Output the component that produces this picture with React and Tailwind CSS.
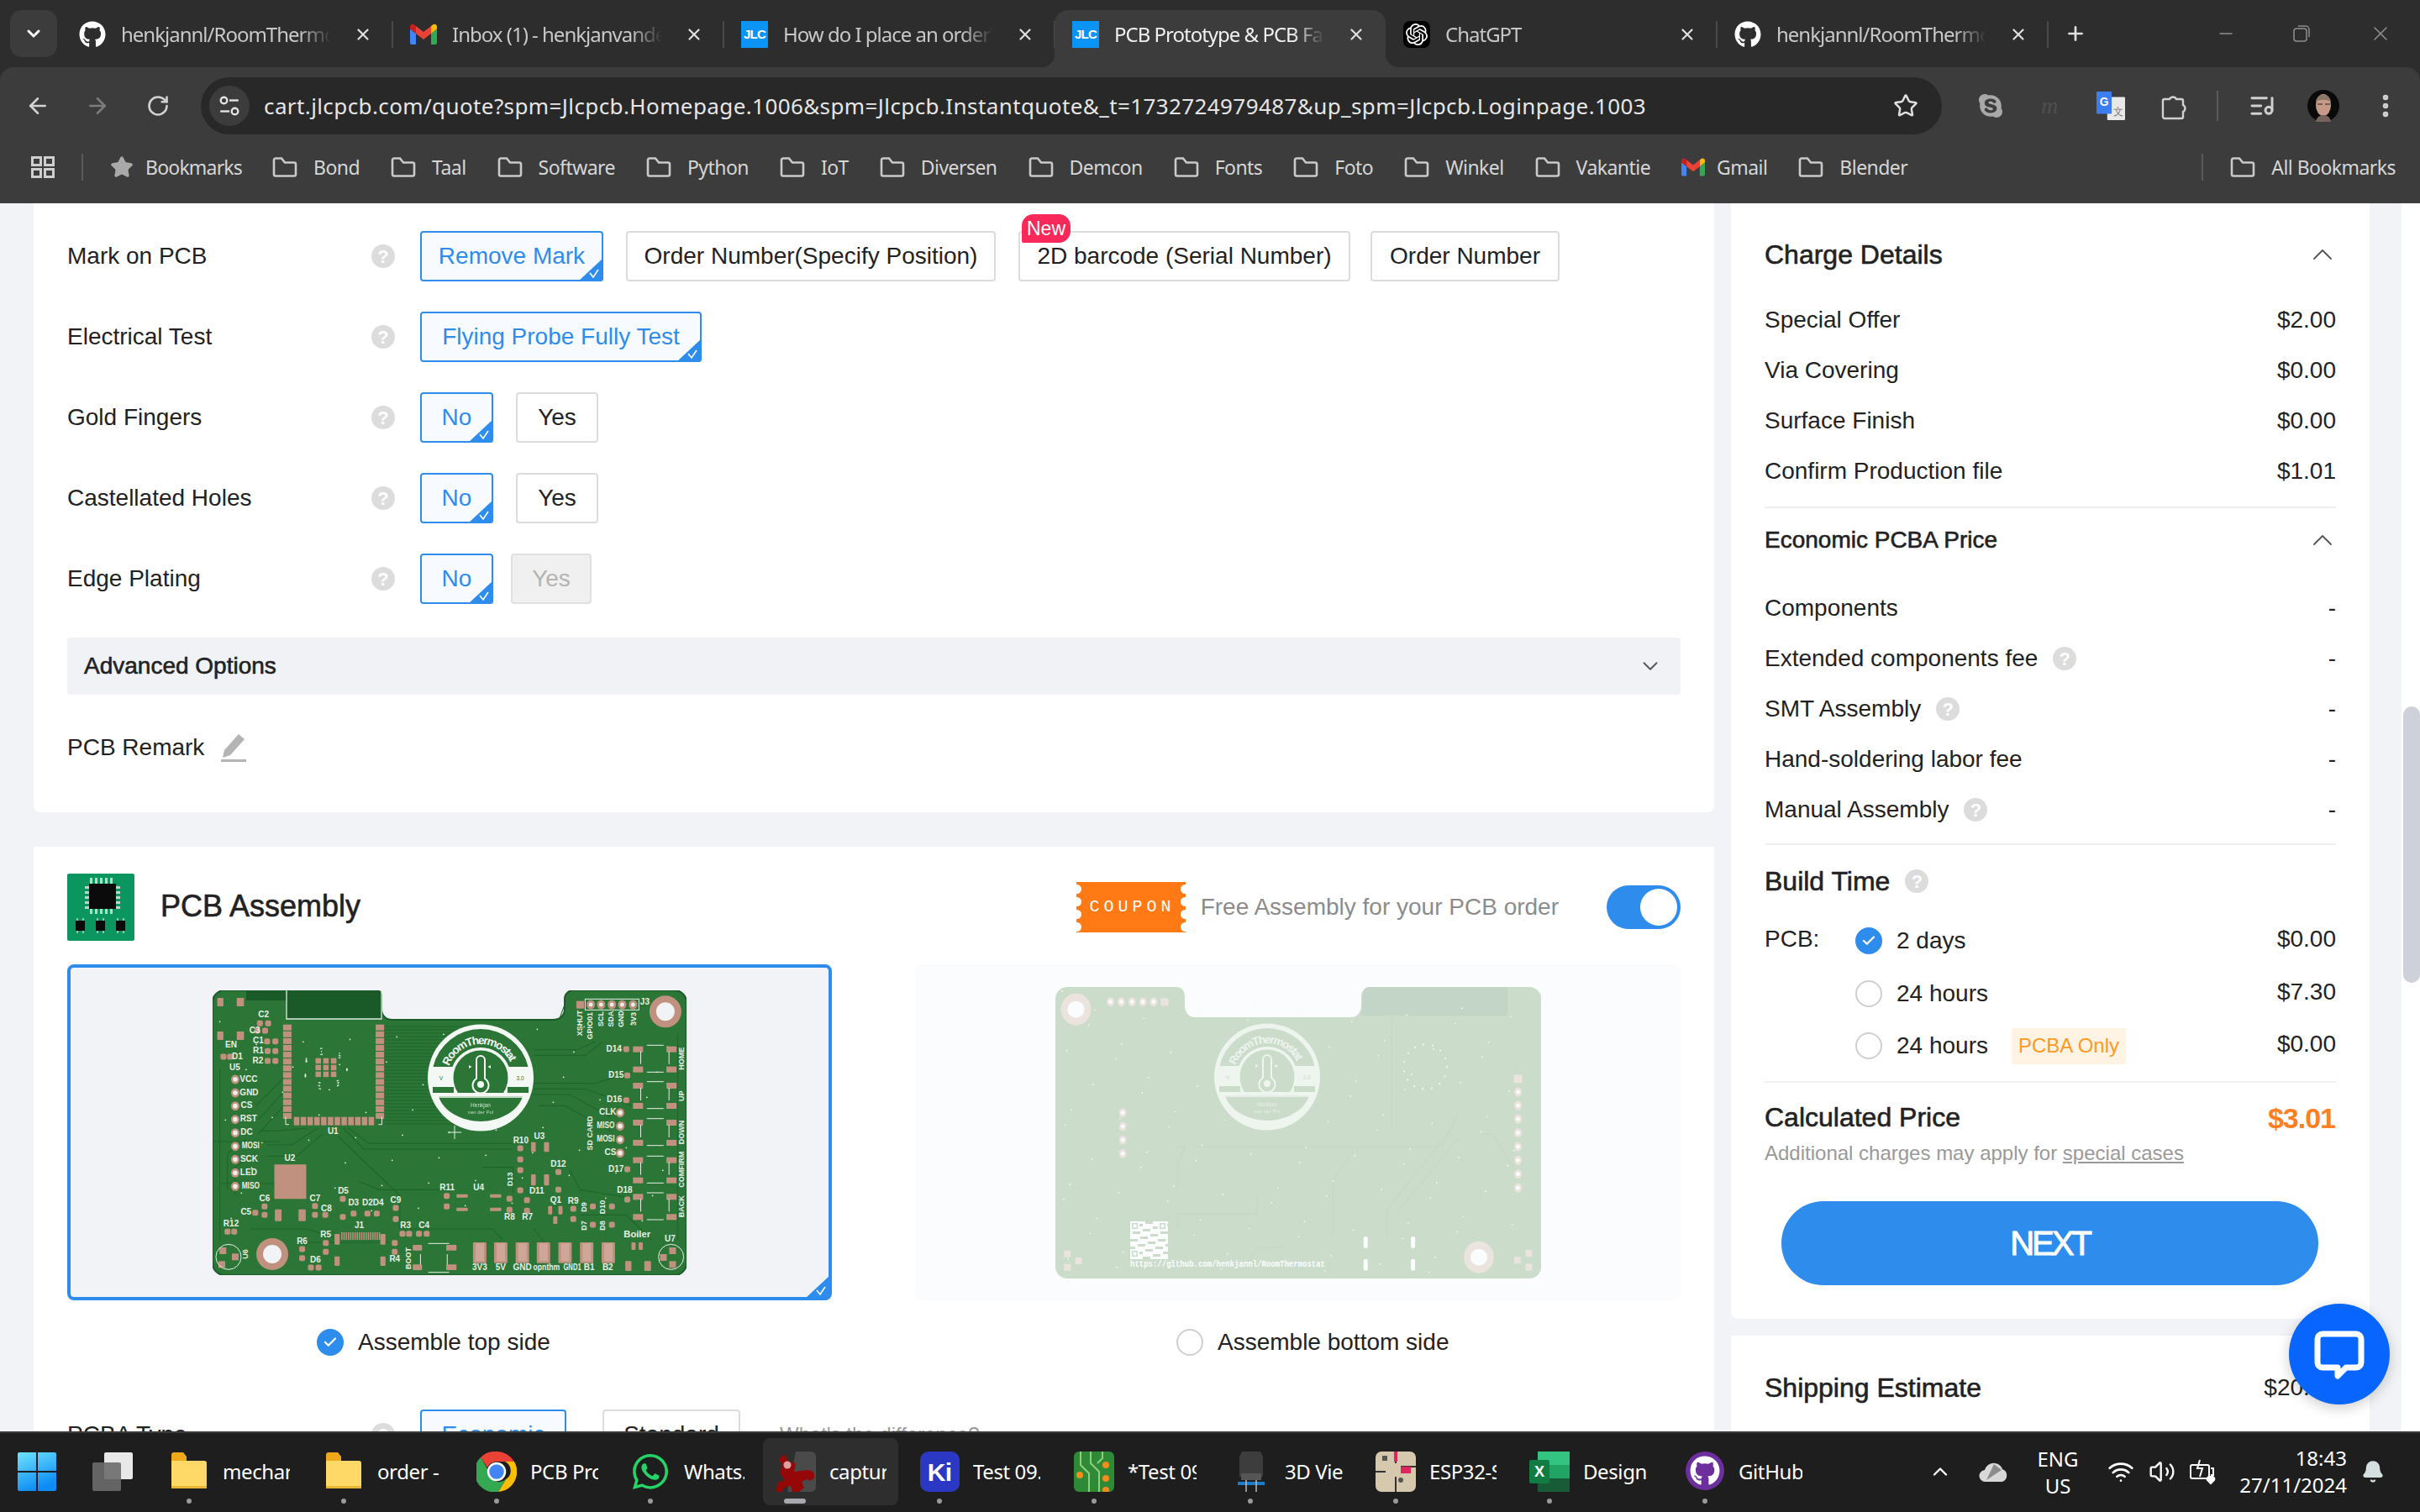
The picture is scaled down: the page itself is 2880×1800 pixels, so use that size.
// JLCPCB quote page in Chrome on Windows 11
import React from 'react'
import { ArrowLeft, ArrowRight, RotateCw, Star, ListMusic, EllipsisVertical, ChevronDown, ChevronUp, Check, Plus, X, Minus, Wifi, Volume2, Bell } from 'lucide-react'
import { FaGithub, FaSkype, FaWhatsapp } from 'react-icons/fa'
import { SiOpenai } from 'react-icons/si'

const STROKE = '[-webkit-text-stroke:0.6px]'

function GmailIcon({ className }) {
  return (
    <svg viewBox="0 0 32 24" className={className}>
      <path d="M2 24h5V11L0 5.5V22a2 2 0 0 0 2 2z" fill="#4285f4" />
      <path d="M25 24h5a2 2 0 0 0 2-2V5.5L25 11z" fill="#34a853" />
      <path d="M25 2v9l7-5.500V3c0-2.700-3-4-5-2.500z" fill="#fbbc04" />
      <path d="M7 11V2l9 7 9-7v9l-9 7z" fill="#ea4335" />
      <path d="M0 3v2.500L7 11V2L5 .5C3-1 0 .3 0 3z" fill="#c5221f" />
    </svg>
  )
}

function FolderIcon() {
  return (
    <svg viewBox="0 0 30 26" className="h-[26px] w-[30px] shrink-0 fill-none stroke-[#c9c9c9] stroke-[2.600]">
      <path d="M2 4.500a2 2 0 0 1 2-2h7l4 5h11a2 2 0 0 1 2 2v12a2 2 0 0 1-2 2H4a2 2 0 0 1-2-2z" />
    </svg>
  )
}

function JlcIcon() {
  return (
    <span className="flex size-[32px] shrink-0 items-center justify-center bg-[#0a94f5] font-['Liberation_Sans'] text-[15px] font-bold tracking-tighter text-white">
      JLC
    </span>
  )
}

function Tab({ icon, title, active, last }) {
  return (
    <div className={`relative flex h-[68px] w-[394px] shrink-0 items-center pb-[10px] pl-[21px] pr-[24px] ${active ? 'rounded-t-[16px] bg-[#3c3c3c]' : ''}`}>
      {active && (
        <>
          <span className="absolute -left-[16px] bottom-0 size-[16px] bg-[radial-gradient(circle_at_0_0,transparent_16px,#3c3c3c_16.5px)]" />
          <span className="absolute -right-[16px] bottom-0 size-[16px] bg-[radial-gradient(circle_at_100%_0,transparent_16px,#3c3c3c_16.5px)]" />
        </>
      )}
      <span className="flex w-[32px] shrink-0 justify-center">{icon}</span>
      <span className={`ml-[18px] w-[250px] overflow-hidden whitespace-nowrap text-[24px] tracking-[-1px] [mask-image:linear-gradient(to_right,black_85%,transparent)] ${active ? 'text-[#f0f0f0]' : 'text-[#c8c8c8]'}`}>
        {title}
      </span>
      <X className="ml-auto size-[22px] shrink-0 text-[#e0e0e0]" strokeWidth={2.4} />
      {!last && !active && <span className="absolute -right-px top-[13px] h-[32px] w-[2px] bg-[#4a4a4a]" />}
    </div>
  )
}

function TabStrip() {
  return (
    <div className="flex h-[80px] shrink-0 items-start bg-[#2d2d2d] pl-[12px] pt-[12px] font-['Noto_Sans']">
      <div className="mr-[5px] flex h-[56px] w-[56px] shrink-0 items-center justify-center rounded-[14px] bg-[#3c3c3c]">
        <ChevronDown className="size-[24px] text-white" strokeWidth={3} />
      </div>
      <Tab icon={<FaGithub className="size-[32px] text-white" />} title="henkjannl/RoomThermostat" />
      <Tab icon={<GmailIcon className="h-[26px] w-[32px]" />} title="Inbox (1) - henkjanvandermeer" />
      <Tab icon={<JlcIcon />} title="How do I place an order?" />
      <Tab active icon={<JlcIcon />} title="PCB Prototype & PCB Fabrication" />
      <Tab
        icon={
          <span className="flex size-[32px] items-center justify-center rounded-[8px] bg-black">
            <SiOpenai className="size-[26px] text-white" />
          </span>
        }
        title="ChatGPT"
      />
      <Tab icon={<FaGithub className="size-[32px] text-white" />} title="henkjannl/RoomThermostat" />
      <Plus className="ml-[20px] mt-[15px] size-[26px] shrink-0 text-[#e0e0e0]" strokeWidth={2.5} />
      <Minus className="ml-[154px] mt-[16px] size-[24px] shrink-0 text-[#8e8e8e]" strokeWidth={1.5} />
      <svg viewBox="0 0 24 24" className="ml-[66px] mt-[16px] size-[24px] shrink-0 fill-none stroke-[#8e8e8e] stroke-[1.500]">
        <rect x="3" y="6" width="15" height="15" rx="3" />
        <path d="M8 3h9a4 4 0 0 1 4 4v9" />
      </svg>
      <X className="ml-[68px] mt-[14px] size-[28px] shrink-0 text-[#8e8e8e]" strokeWidth={1.3} />
    </div>
  )
}

function TuneIcon() {
  return (
    <svg viewBox="0 0 24 24" className="size-[26px] fill-none stroke-[#e4e4e4] stroke-[2.200]">
      <circle cx="6" cy="6" r="3.500" />
      <path d="M12 6h10" />
      <circle cx="18" cy="18" r="3.500" />
      <path d="M2 18h10" />
    </svg>
  )
}

function AddressBar() {
  return (
    <div className="flex h-[80px] shrink-0 items-center pt-[12px] font-['Noto_Sans']">
      <ArrowLeft className="ml-[30px] size-[30px] shrink-0 text-[#d2d2d2]" strokeWidth={2} />
      <ArrowRight className="ml-[41px] size-[30px] shrink-0 text-[#7c7c7c]" strokeWidth={2} />
      <RotateCw className="ml-[43px] size-[28px] shrink-0 text-[#d2d2d2]" strokeWidth={2.200} />
      <div className="ml-[37px] flex h-[68px] w-[2072px] shrink-0 items-center rounded-full bg-[#282828] pl-[10px] pr-[28px]">
        <span className="flex size-[48px] shrink-0 items-center justify-center rounded-full bg-[#3c3c3c]">
          <TuneIcon />
        </span>
        <span className="ml-[17px] whitespace-nowrap text-[26px] tracking-[0.4px] text-[#e6e6e6]">
          cart.jlcpcb.com/quote?spm=Jlcpcb.Homepage.1006&amp;spm=Jlcpcb.Instantquote&amp;_t=1732724979487&amp;up_spm=Jlcpcb.Loginpage.1003
        </span>
        <Star className="ml-auto size-[30px] shrink-0 text-[#e0e0e0]" strokeWidth={2} />
      </div>
      <FaSkype className="ml-[42px] size-[32px] shrink-0 text-[#a8a8a8]" />
      <span className="ml-[37px] w-[34px] shrink-0 text-center font-['Liberation_Serif'] text-[28px] italic text-[#4f4f4f]">m</span>
      <svg viewBox="0 0 32 32" className="ml-[39px] size-[34px] shrink-0">
        <rect x="12" y="6" width="20" height="26" rx="1" fill="#e8e8e8" />
        <rect x="0" y="0" width="17" height="25" rx="1" fill="#3c7df0" />
        <text x="8.500" y="16" textAnchor="middle" fontSize="13" fontWeight="700" fill="#fff" fontFamily="Liberation Sans">G</text>
        <text x="24" y="26" textAnchor="middle" fontSize="11" fill="#777" fontFamily="Liberation Sans">文</text>
      </svg>
      <svg viewBox="0 0 32 34" className="ml-[42px] h-[34px] w-[32px] shrink-0 fill-none stroke-[#d0d0d0] stroke-[2.400]">
        <path d="M5 9h6a4.500 4.500 0 0 1 8 0h6a2 2 0 0 1 2 2v5a4.500 4.500 0 0 1 0 8v6a2 2 0 0 1-2 2H5a2 2 0 0 1-2-2V11a2 2 0 0 1 2-2z" />
      </svg>
      <span className="ml-[35px] h-[36px] w-[2px] shrink-0 bg-[#5a5a5a]" />
      <ListMusic className="ml-[36px] size-[32px] shrink-0 text-[#d0d0d0]" strokeWidth={2.200} />
      <svg viewBox="0 0 38 38" className="ml-[38px] size-[38px] shrink-0">
        <circle cx="19" cy="19" r="19" fill="#0a0a0a" />
        <ellipse cx="19" cy="18" rx="9" ry="13" fill="#c79a88" />
        <path d="M10 38c1-6 5-8 9-8s8 2 9 8z" fill="#77635c" />
        <path d="M10 14c1-6 5-8 9-8s8 2 9 8c-5-3-13-3-18 0z" fill="#8b7767" />
        <path d="M12 17h6M21 17h6" stroke="#5a4a42" strokeWidth="1.500" />
      </svg>
      <EllipsisVertical className="ml-[38px] size-[34px] shrink-0 text-[#d0d0d0]" strokeWidth={2.600} />
    </div>
  )
}

const BOOKMARKS = ['Bond', 'Taal', 'Software', 'Python', 'IoT', 'Diversen', 'Demcon', 'Fonts', 'Foto', 'Winkel', 'Vakantie']

function Bookmark({ name, icon, gap = 'gap-[19px]' }) {
  return (
    <div className={`flex shrink-0 items-center ${gap}`}>
      {icon || <FolderIcon />}
      <span className="whitespace-nowrap text-[23px] tracking-[-0.55px] text-[#d6d6d6]">{name}</span>
    </div>
  )
}

function BookmarksBar() {
  return (
    <div className="flex h-[82px] shrink-0 items-center pb-[4px] pl-[37px] pr-[29px] font-['Noto_Sans']">
      <svg viewBox="0 0 28 26" className="h-[26px] w-[28px] shrink-0 fill-none stroke-[#cfcfcf] stroke-[3]">
        <rect x="1.500" y="1.500" width="10" height="9" />
        <rect x="16.500" y="1.500" width="10" height="9" />
        <rect x="1.500" y="15.500" width="10" height="9" />
        <rect x="16.500" y="15.500" width="10" height="9" />
      </svg>
      <span className="ml-[32px] h-[32px] w-[2px] shrink-0 bg-[#5a5a5a]" />
      <Star className="ml-[32px] size-[28px] shrink-0 fill-[#a9a9a9] text-[#a9a9a9]" />
      <span className="ml-[14px] mr-[36px] shrink-0 text-[23px] tracking-[-0.8px] text-[#d6d6d6]">Bookmarks</span>
      <div className="flex items-center gap-[37px]">
        {BOOKMARKS.map((b) => <Bookmark key={b} name={b} />)}
        <Bookmark name="Gmail" gap="gap-[14px]" icon={<GmailIcon className="h-[22px] w-[28px]" />} />
        <Bookmark name="Blender" />
      </div>
      <span className="ml-auto mr-[32px] h-[32px] w-[2px] shrink-0 bg-[#5a5a5a]" />
      <Bookmark name="All Bookmarks" />
    </div>
  )
}

function Help({ className = '' }) {
  return (
    <span className={`flex size-[28px] shrink-0 items-center justify-center rounded-full bg-[#dcdcdc] font-['Liberation_Sans'] text-[22px] font-bold text-white ${className}`}>
      ?
    </span>
  )
}

function Corner() {
  return (
    <svg viewBox="0 0 30 28" className="absolute -bottom-[2px] -right-[2px] h-[28px] w-[30px]">
      <path d="M30 0V24a4 4 0 0 1-4 4H0z" fill="#2e8cec" />
      <path d="M14 18l4 5 6-9" fill="none" stroke="#fff" strokeWidth="1.600" />
    </svg>
  )
}

function Option({ children, selected, disabled, className = '', badge }) {
  let tone = 'border-[#dcdcdc] bg-white text-[#222]'
  if (selected) tone = 'border-[#2e8cec] bg-[#f7fbff] text-[#2e8cec]'
  if (disabled) tone = 'border-[#e0e0e0] bg-[#f0f0f0] text-[#b4b4b4]'
  return (
    <div className={`relative flex h-[60px] shrink-0 items-center justify-center rounded-[4px] border-2 text-[28px] ${tone} ${className}`}>
      {children}
      {selected && <Corner />}
      {badge && (
        <span className="absolute left-[2px] -top-[22px] flex h-[34px] w-[58px] items-center justify-center rounded-bl-[2px] rounded-br-[14px] rounded-tl-[14px] rounded-tr-[14px] bg-[#f8285a] text-[23px] text-white">
          {badge}
        </span>
      )}
    </div>
  )
}

function OptionRow({ label, children }) {
  return (
    <div className="flex h-[60px] items-center">
      <span className="w-[362px] text-[28px] text-[#222]">{label}</span>
      <Help />
      <div className="ml-[30px] flex items-center">{children}</div>
    </div>
  )
}

// the two board renders are traced from the reference, z coordinates follow a 1.633 x 3 crop
const fx = (z) => (z - 316) / 1.633
const fy = (z) => (z - 148) / 3
const PAD = '#c1917f'
const BOARD = '#2b7636'

function Logo({ cx, cy, fg, bg, id }) {
  return (
    <g transform={`translate(${cx} ${cy})`} fontFamily="Liberation Sans">
      <ellipse rx="63" ry="63.500" fill={fg} />
      <path d="M-56.500 -13A58 58 0 0 1 56.500 -13L33.600 -13A36 36 0 0 0 -33.600 -13z" fill={bg} />
      <path d="M-40 0A40 40 0 0 1 40 0" id={id} fill="none" />
      <text fontWeight="700" fontSize="13.500" letterSpacing="-1.500" fill={fg}>
        <textPath href={`#${id}`} startOffset="14">RoomThermostat</textPath>
      </text>
      <circle r="32.500" fill={bg} />
      <rect x="-57" y="11" width="25" height="7" fill={bg} />
      <rect x="32" y="11" width="25" height="7" fill={bg} />
      <rect x="-34" y="18" width="68" height="4" fill={fg} />
      <path d="M-50 22H50C45 40 22 52 0 52S-45 40 -50 22z" fill={bg} />
      <rect x="-50" y="22" width="100" height="2" fill={fg} opacity=".75" />
      <text x="0" y="35" textAnchor="middle" fontSize="6.500" fill={fg} opacity=".8">Henkjan</text>
      <text x="0" y="43" textAnchor="middle" fontSize="6" fill={fg} opacity=".7">van der Pol</text>
      <text x="-47" y="3" textAnchor="middle" fontSize="6.500" fill={bg}>V</text>
      <text x="47" y="3" textAnchor="middle" fontSize="6.500" fill={bg}>3.0</text>
      <path d="M-5 -21a5 5 0 0 1 10 0V1a9.500 9.500 0 1 1-10 0z" fill="none" stroke={fg} strokeWidth="2" />
      <circle cy="8" r="4" fill={fg} />
      <path d="M-14 -15l3.500 2-3.500 2zM12 -15l-3.500 2 3.500 2z" fill={fg} />
    </g>
  )
}

const FRONT_LABELS = [
  ['C2', 415, 237], ['C3', 398, 293], ['C1', 405, 330], ['R1', 405, 365], ['R2', 404, 400], ['D1', 364, 385], ['U5', 359, 424], ['EN', 352, 344],
  ['U2', 466, 750], ['C6', 417, 892], ['C5', 381, 942], ['C7', 515, 894], ['C8', 537, 928], ['D5', 570, 867], ['D3', 590, 907], ['D2', 617, 907], ['D4', 638, 907],
  ['C9', 672, 899], ['J1', 601, 990], ['R3', 691, 990], ['C4', 727, 990], ['R5', 536, 1023], ['R6', 490, 1047], ['D6', 516, 1112], ['R4', 670, 1110], ['U1', 550, 653],
  ['R10', 915, 687], ['U3', 951, 670], ['D12', 988, 771], ['D11', 946, 865], ['R11', 772, 855], ['U4', 833, 853], ['Q1', 983, 900], ['R9', 1017, 903], ['R8', 893, 960], ['R7', 928, 960],
  ['D14', 1096, 358], ['D15', 1100, 452], ['D16', 1097, 540], ['D17', 1100, 787], ['D18', 1117, 864], ['Boiler', 1141, 1023], ['U7', 1205, 1036], ['R12', 352, 982], ['J3', 1156, 190],
  ['VCC', 386, 466], ['GND', 387, 514], ['CS', 382, 561], ['RST', 386, 609], ['DC', 382, 657], ['MOSI', 390, 705], ['SCK', 387, 752], ['LED', 386, 800], ['MISO', 390, 848],
  ['CLK', 1084, 585], ['MISO', 1080, 633], ['MOSI', 1080, 681], ['CS', 1089, 729],
  ['3V3', 835, 1140], ['5V', 876, 1140], ['GND', 918, 1140], ['opnthm', 965, 1140], ['GND1', 1015, 1140], ['B1', 1048, 1140], ['B2', 1084, 1140],
]
const FRONT_VERTICAL = [
  ['XSHUT', 1030, 265], ['GPIO01', 1050, 275], ['SCL', 1071, 250], ['SDA', 1091, 250], ['GND', 1111, 250], ['3V3', 1135, 250], ['SD CARD', 1050, 658],
  ['HOME', 1228, 392], ['UP', 1228, 525], ['DOWN', 1228, 655], ['COMFIRM', 1228, 788], ['BACK', 1228, 920], ['BOOT', 697, 1105], ['U6', 381, 1090], ['D13', 895, 822], ['D9', 1038, 922], ['D10', 1075, 922], ['D7', 1038, 988], ['D8', 1075, 988],
]
const FRONT_PADS = [
  [822, 1048, 848, 1122], [863, 1048, 889, 1122], [905, 1048, 931, 1122], [946, 1048, 972, 1122], [988, 1048, 1014, 1122], [1030, 1048, 1056, 1122], [1072, 1048, 1098, 1122],
  [436, 770, 498, 893], [437, 930, 450, 972], [483, 930, 497, 972], [325, 175, 337, 205], [363, 175, 377, 205], [325, 295, 337, 325], [363, 295, 377, 325],
  [705, 1057, 723, 1077], [770, 1057, 790, 1077], [705, 1127, 723, 1147], [770, 1127, 790, 1147],
  [790, 876, 812, 888], [855, 876, 877, 888], [790, 924, 812, 936], [855, 924, 877, 936], [935, 690, 944, 725], [960, 690, 970, 725], [935, 805, 944, 845], [960, 805, 970, 845],
  [968, 918, 976, 948], [988, 918, 996, 948], [978, 955, 986, 982], [1118, 1115, 1130, 1150], [1155, 1115, 1168, 1150], [1130, 1048, 1138, 1075], [1144, 1048, 1152, 1075],
  [553, 1018, 563, 1056], [642, 1018, 652, 1056], [553, 1098, 563, 1132], [642, 1098, 652, 1132],
]
const FRONT_SMALL = [
  [408, 266], [424, 266], [403, 292], [418, 292], [422, 330], [438, 330], [423, 365], [438, 365], [423, 400], [438, 400], [345, 1010], [358, 1010],
  [417, 920], [417, 950], [399, 942], [515, 918], [515, 950], [535, 950], [672, 925], [672, 965], [569, 893], [569, 957], [590, 945], [617, 945], [635, 945],
  [685, 1017], [698, 1017], [717, 1017], [732, 1017], [536, 1050], [536, 1082], [490, 1072], [490, 1104], [670, 1050], [670, 1082], [507, 1138], [522, 1138],
  [914, 712], [914, 752], [914, 790], [914, 862], [988, 797], [988, 860], [771, 882], [771, 920], [893, 892], [893, 932], [927, 897], [927, 935], [1017, 928], [1017, 965],
  [1120, 358], [1122, 452], [1120, 540], [1122, 787], [1122, 895], [1055, 920], [1092, 920], [1055, 985], [1092, 985], [337, 385], [350, 385],
]
const FRONT_TRACES = [
  'M570 640L610 715H900', 'M580 640L620 695H900', 'M560 670L680 880V1000', 'M530 660L480 740H420', 'M520 640L470 700H420',
  'M500 640L440 650H410', 'M455 460L400 560', 'M455 510L405 610', 'M455 560L405 660', 'M840 780H900V870', 'M1010 790L1030 860L1130 890', 'M700 1000H860L880 1040', 'M940 1000L960 1045',
  'M390 1000H500L550 1030', 'M1220 300V1040', 'M330 430V1040', 'M990 250L1000 200', 'M1060 330L1025 360H940', 'M1075 330L1040 380H940', 'M1130 440L1060 480H940',
  'M1130 560L1040 500H940', 'M1090 600L1010 520H920', 'M1090 650L1000 560H950', 'M380 680L345 730V860', 'M400 730L360 780V880', 'M600 830L640 860H770', 'M1030 950H1120L1170 1040',
]
const VIAS = Array.from({ length: 80 }, (_, i) => [330 + ((i * 7919) % 890), 260 + ((i * 104729) % 880)])

function traced(d) {
  let out = ''
  for (const [, c, a, b] of d.matchAll(/([MHVL])(\d+)(?: (\d+))?/g)) {
    if (c === 'H') out += `H${fx(+a)}`
    else if (c === 'V') out += `V${fy(+a)}`
    else out += `${c}${fx(+a)} ${fy(+b)}`
  }
  return out
}

function FrontBoard() {
  return (
    <svg viewBox="0 0 564 339" className="h-[339px] w-[564px]">
      <path d="M14 0H195a6 6 0 0 1 6 6V22c0 8 5 13 13 13H405c8 0 14-5 14-13V10a10 10 0 0 1 10-10H550a14 14 0 0 1 14 14V325a14 14 0 0 1-14 14H14a14 14 0 0 1-14-14V14A14 14 0 0 1 14 0z" fill={BOARD} stroke="#1a5c2a" strokeWidth="2" />
      <path d="M40 1H201V34H88V12H40z" fill="#1a5a28" />
      <path d="M88 0V34H201V0" fill="none" stroke="#dfe9df" strokeWidth="1.300" />
      <g fill="none" stroke="#1f652b" strokeWidth="1.100">
        {Array.from({ length: 30 }, (_, i) => <path key={i} d={`M204 ${43 + i * 4}H${i % 3 === 0 ? 300 : 345}`} />)}
        {FRONT_TRACES.map((d, i) => <path key={i} d={traced(d)} />)}
        <path d="M0 180H80M10 230H90M100 300H210" />
      </g>
      {VIAS.map(([z, w], i) => <circle key={i} cx={fx(z)} cy={fy(w)} r=".9" fill="#e8efe8" />)}
      {/* ESP32 module */}
      {Array.from({ length: 14 }, (_, i) => (
        <g key={i} fill={PAD}>
          <rect x={fx(453)} y={fy(270 + i * 24.300)} width="10" height="7" />
          <rect x={fx(633)} y={fy(270 + i * 24.300)} width="10" height="7" />
        </g>
      ))}
      {Array.from({ length: 12 }, (_, i) => <rect key={i} x={fx(474 + i * 13.200)} y={fy(600)} width="6.500" height="10" fill={PAD} />)}
      {Array.from({ length: 9 }, (_, i) => <rect key={i} x={fx(516 + (i % 3) * 15)} y={fy(390 + Math.floor(i / 3) * 24)} width="6.500" height="6.500" fill={PAD} />)}
      {Array.from({ length: 40 }, (_, i) => <circle key={i} cx={fx(535 + 42 * Math.cos(i * 0.9))} cy={fy(428 + 74 * Math.sin(i * 0.9) * (0.7 + (i % 3) * 0.15))} r=".8" fill="#e8efe8" />)}
      <path d={`M${fx(458)} ${fy(600)}v9h4M${fx(645)} ${fy(600)}v9h-4`} fill="none" stroke="#e8efe8" />
      {/* test points and mounting holes */}
      {[466, 514, 561, 609, 657, 705, 752, 800, 848].map((y) => (
        <g key={y}>
          <ellipse cx={fx(360)} cy={fy(y)} rx="5" ry="5.500" fill={PAD} />
          <circle cx={fx(360)} cy={fy(y)} r="2.800" fill="#eee" />
        </g>
      ))}
      {[585, 633, 681, 729].map((y) => (
        <g key={y}>
          <ellipse cx={fx(1108)} cy={fy(y)} rx="5" ry="5.500" fill={PAD} />
          <circle cx={fx(1108)} cy={fy(y)} r="2.800" fill="#eee" />
        </g>
      ))}
      {[1051, 1071, 1092, 1112, 1133].map((x) => (
        <g key={x}>
          <ellipse cx={fx(x)} cy={fy(199)} rx="5" ry="5.500" fill={PAD} />
          <circle cx={fx(x)} cy={fy(199)} r="2.400" fill="#eee" />
        </g>
      ))}
      <rect x={fx(1040)} y={fy(179)} width="64" height="13" fill="none" stroke="#e8efe8" />
      <rect x={fx(1023)} y={fy(186)} width="9" height="9" fill={PAD} />
      <circle cx={fx(1196)} cy={fy(224)} r="19" fill={PAD} />
      <circle cx={fx(1196)} cy={fy(224)} r="11" fill="#f1f3f7" />
      <circle cx={fx(432)} cy={fy(1090)} r="19" fill={PAD} />
      <circle cx={fx(432)} cy={fy(1090)} r="11" fill="#f1f3f7" />
      {[[336, 1078], [334, 1127], [360, 1100], [1210, 1078], [1192, 1102], [1210, 1127]].map(([x, y]) => (
        <rect key={x + y} x={fx(x) - 4} y={fy(y) - 4} width="8" height="8" fill={PAD} />
      ))}
      <circle cx={fx(347)} cy={fy(1100)} r="15" fill="none" stroke="#e8efe8" />
      <circle cx={fx(1207)} cy={fy(1100)} r="15" fill="none" stroke="#e8efe8" />
      {/* tact switches */}
      {[358, 488, 620, 754, 885].map((y) => (
        <g key={y}>
          <rect x={fx(1133)} y={fy(y - 10)} width="12" height="7" fill={PAD} />
          <rect x={fx(1198)} y={fy(y - 10)} width="12" height="7" fill={PAD} />
          <rect x={fx(1133)} y={fy(y + 62)} width="12" height="7" fill={PAD} />
          <rect x={fx(1198)} y={fy(y + 62)} width="12" height="7" fill={PAD} />
          <path d={`M${fx(1148)} ${fy(y + 8)}v15M${fx(1203)} ${fy(y + 8)}v15M${fx(1160)} ${fy(y - 14)}h20M${fx(1160)} ${fy(y + 82)}h20`} stroke="#e8efe8" fill="none" />
        </g>
      ))}
      <path d={`M${fx(720)} ${fy(1090)}v15M${fx(772)} ${fy(1090)}v15M${fx(735)} ${fy(1052)}h25M${fx(735)} ${fy(1155)}h25`} stroke="#e8efe8" fill="none" />
      {FRONT_PADS.map(([a, b, c, d], i) => (
        <rect key={i} x={fx(a)} y={fy(b)} width={(c - a) / 1.633} height={(d - b) / 3} rx="1" fill={PAD} />
      ))}
      {FRONT_PADS.slice(0, 7).map(([a, b], i) => <rect key={i} x={fx(a + 5)} y={fy(b + 4)} width="10" height="21" fill="#d9b6a8" opacity=".6" />)}
      {FRONT_SMALL.map(([x, y], i) => <rect key={i} x={fx(x) - 3.500} y={fy(y) - 3.500} width="7" height="7" rx="2" fill={PAD} />)}
      {Array.from({ length: 18 }, (_, i) => <rect key={i} x={fx(566 + i * 4.300)} y={fy(1012)} width="1.500" height="9" fill={PAD} />)}
      <g fill="#e6eee6" fontFamily="Liberation Sans" fontSize="10" fontWeight="700" textAnchor="middle" dominantBaseline="middle">
        {FRONT_LABELS.map(([t, x, y], i) => <text key={i} x={fx(x)} y={fy(y)} textLength={t.length > 3 ? t.length * 5.300 : undefined} lengthAdjust="spacingAndGlyphs">{t}</text>)}
        {FRONT_VERTICAL.map(([t, x, y], i) => <text key={i} fontSize="9" transform={`translate(${fx(x)} ${fy(y)}) rotate(-90)`}>{t}</text>)}
      </g>
      <Logo cx={319} cy={104} fg="#f4f8f4" bg={BOARD} id="front-arc" />
      <path d="M288 161v16M280 169h16" stroke="#e8efe8" fill="none" />
    </svg>
  )
}

const bx = (z) => (z - 287) / 1.633
const by = (z) => (z - 135) / 3
const QR = Array.from({ length: 225 }, (_, i) => ((i * i * 31 + i * 17) % 11) < 5)

function BackBoard() {
  const vias = []
  for (let i = 0; i < 110; i++) vias.push([300 + ((i * 6151) % 915), 150 + ((i * 9973) % 1010)])
  return (
    <svg viewBox="0 0 578 347" className="h-[347px] w-[578px]">
      <path d="M14 0H144c7 0 10 5 10 12V22c0 8 5 14 12 14H352c7 0 12-6 12-14V12c0-7 4-12 11-12H564a14 14 0 0 1 14 14V333a14 14 0 0 1-14 14H14a14 14 0 0 1-14-14V14A14 14 0 0 1 14 0z" fill="#cbdccb" />
      <path d="M366 8c0-5 3-8 8-8H538V34H364z" fill="#c3d5c6" />
      <g fill="none" stroke="#c3d6c3" strokeWidth="1">
        <path d="M140 190H155L145 210V240M165 190H460L480 150" />
        <path d="M145 290V270H240V250M220 340L240 310H270" />
        <path d="M330 300V230L355 195M395 300V265L470 170" />
        <path d="M405 270L480 180M510 175H520L545 215M400 35V170" />
      </g>
      {vias.map(([x, y], i) => <circle key={i} cx={bx(x)} cy={by(y)} r=".9" fill="#f4f8f4" />)}
      {Array.from({ length: 30 }, (_, i) => <circle key={i} cx={bx(1006 + 42 * Math.cos(i * 0.42))} cy={by(420 + 80 * Math.sin(i * 0.42))} r=".9" fill="#f4f8f4" />)}
      <ellipse cx={bx(327)} cy={by(215)} rx="18" ry="19" fill="#ebe3de" />
      <circle cx={bx(327)} cy={by(215)} r="10" fill="#fbfcfe" />
      <ellipse cx={bx(1110)} cy={by(1100)} rx="18" ry="19" fill="#ebe3de" />
      <circle cx={bx(1110)} cy={by(1100)} r="10" fill="#fbfcfe" />
      {[394, 415, 436, 457, 478].map((x) => (
        <g key={x}>
          <ellipse cx={bx(x)} cy={by(188)} rx="4.500" ry="5.500" fill="#ebe3de" />
          <circle cx={bx(x)} cy={by(188)} r="2.300" fill="#fbfcfe" />
        </g>
      ))}
      <rect x={bx(492)} y={by(175)} width="9" height="9" fill="#ebe3de" />
      <rect x={bx(1178)} y={by(448)} width="10" height="10" fill="#ebe3de" />
      {[510, 558, 607, 656, 705, 754, 803, 852].map((y) => (
        <g key={y}>
          <ellipse cx={bx(1186)} cy={by(y)} rx="4.500" ry="5.500" fill="#ebe3de" />
          <circle cx={bx(1186)} cy={by(y)} r="2.300" fill="#fbfcfe" />
        </g>
      ))}
      {[584, 633, 681, 730].map((y) => (
        <g key={y}>
          <ellipse cx={bx(418)} cy={by(y)} rx="4.500" ry="5.500" fill="#ebe3de" />
          <circle cx={bx(418)} cy={by(y)} r="2.300" fill="#fbfcfe" />
        </g>
      ))}
      {[[890, 1047], [982, 1047], [890, 1127], [982, 1127]].map(([x, y]) => (
        <rect key={x + y} x={bx(x) - 2.500} y={by(y) - 7} width="5" height="14" rx="2.500" fill="#fbfcfe" />
      ))}
      {[[310, 1088], [332, 1113], [310, 1136], [1207, 1086], [1185, 1111], [1207, 1136]].map(([x, y]) => (
        <rect key={x + y} x={bx(x) - 4} y={by(y) - 4} width="8" height="8" fill="#ebe3de" />
      ))}
      <g fill="#fbfcfe">
        {QR.map((on, i) => on && <rect key={i} x={89 + (i % 15) * 3} y={279 + Math.floor(i / 15) * 3} width="3" height="3" />)}
        {[[89, 279], [122, 279], [89, 312]].map(([x, y]) => (
          <g key={x + y}>
            <rect x={x} y={y} width="11" height="11" />
            <rect x={x + 2} y={y + 2} width="7" height="7" fill="#cbdccb" />
            <rect x={x + 3.500} y={y + 3.500} width="4" height="4" />
          </g>
        ))}
      </g>
      <text x="89" y="333" fontFamily="Liberation Mono" fontWeight="700" fontSize="10" fill="#fbfcfe" textLength="232" lengthAdjust="spacingAndGlyphs">https://github.com/henkjannl/RoomThermostat</text>
      <Logo cx={252} cy={107} fg="#eef4ee" bg="#cbdccb" id="back-arc" />
    </svg>
  )
}

function ChipLogo() {
  return (
    <svg viewBox="0 0 80 80" className="size-[80px] shrink-0">
      <rect width="80" height="80" rx="2" fill="#0a965e" />
      {[0, 1, 2, 3, 4].map((i) => (
        <g key={i} fill="#b9d8c8">
          <rect x={27 + i * 6} y="5" width="3" height="7" />
          <rect x={27 + i * 6} y="41" width="3" height="7" />
          <rect x="21" y={15 + i * 6} width="7" height="3" />
          <rect x="56" y={15 + i * 6} width="7" height="3" />
        </g>
      ))}
      <rect x="26" y="12" width="32" height="30" fill="#0b0b0b" />
      {[10, 34, 58].map((x) => (
        <g key={x}>
          <rect x={x} y="56" width="11" height="12" fill="#0b0b0b" />
          <path d={`M${x + 2} 53v3M${x + 9} 53v3M${x + 2} 68v3M${x + 9} 68v3`} stroke="#b9d8c8" strokeWidth="1.500" />
        </g>
      ))}
    </svg>
  )
}

function Coupon() {
  return (
    <div className="relative flex h-[60px] w-[130px] shrink-0 items-center justify-center overflow-hidden bg-[#ff7a14] pl-[4px] font-['Liberation_Mono'] text-[20px] tracking-[5px] text-white">
      COUPON
      {[0, 1, 2, 3].map((i) => (
        <span key={i} className="contents">
          <span className="absolute -left-[5px] size-[11px] rounded-full bg-white" style={{ top: 3 + i * 15 }} />
          <span className="absolute -right-[5px] size-[11px] rounded-full bg-white" style={{ top: 3 + i * 15 }} />
        </span>
      ))}
    </div>
  )
}

function Radio({ checked, size = 'size-[32px]' }) {
  if (checked) {
    return (
      <span className={`flex ${size} shrink-0 items-center justify-center rounded-full bg-[#2e8cec]`}>
        <Check className="size-[18px] text-white" strokeWidth={3} />
      </span>
    )
  }
  return <span className={`${size} shrink-0 rounded-full border-2 border-[#cfcfcf] bg-white`} />
}

function LeftColumn() {
  return (
    <div className="w-[2000px] shrink-0">
      <section className="rounded-b-[8px] bg-white px-[40px] pb-[57px] pt-[33px]">
        <div className="flex flex-col gap-[36px]">
          <OptionRow label="Mark on PCB">
            <Option selected className="w-[218px]">Remove Mark</Option>
            <Option className="ml-[27px] w-[440px]">Order Number(Specify Position)</Option>
            <Option className="ml-[27px] w-[395px]" badge="New">2D barcode (Serial Number)</Option>
            <Option className="ml-[24px] w-[225px]">Order Number</Option>
          </OptionRow>
          <OptionRow label="Electrical Test">
            <Option selected className="w-[335px]">Flying Probe Fully Test</Option>
          </OptionRow>
          <OptionRow label="Gold Fingers">
            <Option selected className="w-[87px]">No</Option>
            <Option className="ml-[27px] w-[98px]">Yes</Option>
          </OptionRow>
          <OptionRow label="Castellated Holes">
            <Option selected className="w-[87px]">No</Option>
            <Option className="ml-[27px] w-[98px]">Yes</Option>
          </OptionRow>
          <OptionRow label="Edge Plating">
            <Option selected className="w-[87px]">No</Option>
            <Option disabled className="ml-[21px] w-[96px]">Yes</Option>
          </OptionRow>
        </div>
        <div className="mt-[40px] flex h-[68px] items-center justify-between rounded-[4px] bg-[#f0f2f6] pl-[20px] pr-[21px]">
          <span className={`text-[28px] text-[#222] ${STROKE}`}>Advanced Options</span>
          <ChevronDown className="size-[30px] text-[#555]" strokeWidth={1.500} />
        </div>
        <div className="mt-[43px] flex h-[40px] items-center">
          <span className="text-[28px] text-[#222]">PCB Remark</span>
          <svg viewBox="0 0 30 36" className="ml-[20px] h-[36px] w-[30px]">
            <path d="M21 2l7 6L11 27l-9 3 2-9z" fill="#b4b4b4" />
            <rect x="0" y="32" width="30" height="3" fill="#b4b4b4" />
          </svg>
        </div>
      </section>

      <section className="mt-[41px] bg-white px-[40px] pt-[32px]">
        <div className="flex h-[80px] items-center">
          <ChipLogo />
          <h2 className={`ml-[31px] pb-[2px] text-[36px] text-[#222] ${STROKE}`}>PCB Assembly</h2>
          <div className="ml-auto"><Coupon /></div>
          <span className="ml-[18px] text-[28px] text-[#8c8c8c]">Free Assembly for your PCB order</span>
          <span className="ml-[57px] flex h-[52px] w-[88px] items-center justify-end rounded-full bg-[#2e8cec] p-[4px]">
            <span className="size-[44px] rounded-full bg-white" />
          </span>
        </div>
        <div className="mt-[28px] grid grid-cols-[910px_911px] gap-x-[99px]">
          <div className="relative flex h-[400px] items-center justify-center rounded-[8px] border-4 border-[#2e8cec] bg-[#f1f3f7]">
            <FrontBoard />
            <svg viewBox="0 0 30 28" className="absolute -bottom-[2px] -right-[2px] h-[28px] w-[30px]">
              <path d="M30 0V24a4 4 0 0 1-4 4H0z" fill="#2e8cec" />
              <path d="M14 18l4 5 6-9" fill="none" stroke="#fff" strokeWidth="1.600" />
            </svg>
          </div>
          <div className="flex h-[400px] items-center justify-center rounded-[8px] bg-[#fbfcfe]">
            <BackBoard />
          </div>
          <div className="mt-[34px] flex h-[32px] items-center gap-[17px] pl-[297px] text-[28px] text-[#222]">
            <Radio checked /> Assemble top side
          </div>
          <div className="mt-[34px] flex h-[32px] items-center gap-[17px] pl-[311px] text-[28px] text-[#222]">
            <Radio /> Assemble bottom side
          </div>
        </div>
        <div className="mt-[64px]">
          <OptionRow label="PCBA Type">
            <Option selected className="w-[174px]">Economic</Option>
            <Option className="ml-[43px] w-[164px]">Standard</Option>
            <span className="ml-[47px] text-[24px] text-[#999]">What's the difference?</span>
          </OptionRow>
        </div>
      </section>
    </div>
  )
}

function PriceRow({ label, value, help }) {
  return (
    <div className="flex h-[60px] items-center text-[28px] text-[#222]">
      <span>{label}</span>
      {help && <Help className="ml-[18px]" />}
      <span className="ml-auto">{value}</span>
    </div>
  )
}

function BuildRow({ label, checked, name, value, tag }) {
  return (
    <div className="flex h-[62.500px] items-center text-[28px] text-[#222]">
      <span className="mb-[4px] w-[108px]">{label}</span>
      <Radio checked={checked} />
      <span className="ml-[17px]">{name}</span>
      {tag && (
        <span className="ml-[28px] flex h-[43px] w-[136px] items-center justify-center bg-[#fff3e3] text-[24px] text-[#ff9a1e]">{tag}</span>
      )}
      <span className="mb-[4px] ml-auto">{value}</span>
    </div>
  )
}

function RightColumn() {
  return (
    <div className="ml-[20px] w-[760px] shrink-0">
      <section className="rounded-b-[8px] bg-white px-[40px] pb-[40px] pt-[41px]">
        <div className="flex h-[40px] items-center justify-between">
          <h3 className={`text-[32px] text-[#222] ${STROKE}`}>Charge Details</h3>
          <ChevronUp className="mr-[-4px] size-[40px] text-[#555]" strokeWidth={1.100} />
        </div>
        <div className="mt-[28px]">
          <PriceRow label="Special Offer" value="$2.00" />
          <PriceRow label="Via Covering" value="$0.00" />
          <PriceRow label="Surface Finish" value="$0.00" />
          <PriceRow label="Confirm Production file" value="$1.01" />
        </div>
        <div className="mt-[12px] border-t-2 border-[#f0f0f0]" />
        <div className="mt-[18px] flex h-[40px] items-center justify-between">
          <h3 className={`text-[28px] text-[#222] ${STROKE}`}>Economic PCBA Price</h3>
          <ChevronUp className="mr-[-4px] size-[40px] text-[#555]" strokeWidth={1.100} />
        </div>
        <div className="mt-[31px]">
          <PriceRow label="Components" value="-" />
          <PriceRow label="Extended components fee" value="-" help />
          <PriceRow label="SMT Assembly" value="-" help />
          <PriceRow label="Hand-soldering labor fee" value="-" />
          <PriceRow label="Manual Assembly" value="-" help />
        </div>
        <div className="mt-[10px] border-t-2 border-[#f0f0f0]" />
        <div className="mt-[23px] flex h-[40px] items-center">
          <h3 className={`text-[32px] text-[#222] ${STROKE}`}>Build Time</h3>
          <Help className="ml-[18px]" />
        </div>
        <div className="mt-[20px]">
          <BuildRow label="PCB:" checked name="2 days" value="$0.00" />
          <BuildRow name="24 hours" value="$7.30" />
          <BuildRow name="24 hours" value="$0.00" tag="PCBA Only" />
        </div>
        <div className="mt-[10px] border-t-2 border-[#f0f0f0]" />
        <div className="mt-[21px] flex h-[40px] items-center justify-between">
          <h3 className={`text-[32px] text-[#222] ${STROKE}`}>Calculated Price</h3>
          <span className="mr-[1px] mt-[3px] text-[34px] font-bold tracking-[-1px] text-[#ff7f22]">$3.01</span>
        </div>
        <p className="mt-[8px] h-[30px] text-[24px] leading-[30px] text-[#999]">
          Additional charges may apply for <span className="underline">special cases</span>
        </p>
        <button className="mx-[20px] mt-[42px] flex h-[100px] w-[639px] items-center justify-center rounded-full bg-[#2e8cec] text-[40px] tracking-[-3px] text-white [-webkit-text-stroke:1px]">
          NEXT
        </button>
      </section>
      <section className="mt-[20px] h-[200px] bg-white px-[40px] pt-[42px]">
        <div className="flex h-[40px] items-center">
          <h3 className={`text-[32px] text-[#222] ${STROKE}`}>Shipping Estimate</h3>
          <span className="ml-auto text-[28px] text-[#222]">$20.00</span>
        </div>
      </section>
    </div>
  )
}

function ChatButton() {
  return (
    <div className="absolute left-[2724px] top-[1552px] flex size-[120px] items-center justify-center rounded-full bg-[#0866ff] shadow-[0_4px_16px_rgba(0,0,0,0.2)]">
      <svg viewBox="0 0 60 60" className="size-[60px]">
        <path d="M10 6h40a6 6 0 0 1 6 6v28a6 6 0 0 1-6 6H38l-10 10v-10H10a6 6 0 0 1-6-6V12a6 6 0 0 1 6-6z" fill="none" stroke="#fff" strokeWidth="7" strokeLinejoin="round" />
      </svg>
    </div>
  )
}

function WinIcon() {
  return (
    <svg viewBox="0 0 46 46" className="size-[46px] shrink-0">
      <defs>
        <linearGradient id="win" x1="0" y1="0" x2="0.4" y2="1">
          <stop offset="0" stopColor="#6fe3ff" />
          <stop offset="1" stopColor="#0d8cf5" />
        </linearGradient>
      </defs>
      <path d="M0 2a2 2 0 0 1 2-2h20v22H0zM24 0h20a2 2 0 0 1 2 2v20H24zM0 24h22v22H2a2 2 0 0 1-2-2zM24 24h22v20a2 2 0 0 1-2 2H24z" fill="url(#win)" />
    </svg>
  )
}

function TaskFolder() {
  return (
    <svg viewBox="0 0 42 44" className="h-[44px] w-[42px]">
      <path d="M0 4a3 3 0 0 1 3-3h11l4 5v6H0z" fill="#eea81a" />
      <path d="M0 11h39a3 3 0 0 1 3 3v27a3 3 0 0 1-3 3H3a3 3 0 0 1-3-3z" fill="#ffd968" />
      <rect y="41" width="42" height="3" fill="#e9b634" />
    </svg>
  )
}

function ChromeIcon() {
  return (
    <svg viewBox="0 0 48 48" className="size-[48px]">
      <path d="M24 0a24 24 0 0 1 21 12H24a12 12 0 0 0-11 7L5 7a24 24 0 0 1 19-7z" fill="#ea4335" />
      <path d="M45 12a24 24 0 0 1-19 36l9-15a12 12 0 0 0-1-21z" fill="#fbbc04" />
      <path d="M5 7l10 17a12 12 0 0 0 20 9l-9 15A24 24 0 0 1 5 7z" fill="#34a853" />
      <circle cx="24" cy="24" r="10" fill="#4285f4" stroke="#fff" strokeWidth="2.500" />
    </svg>
  )
}

function CaptureIcon() {
  return (
    <svg viewBox="0 0 48 48" className="size-[48px]">
      <path d="M24 0h18a6 6 0 0 1 6 6v36a6 6 0 0 1-6 6H14z" fill="#4a4a4a" />
      <path d="M10 3l6 9 8 2-2 10 16-2c6 0 9 4 8 9-2 4-7 4-9 2l-6 3 3 7-6 5h-8l-2-7-8 2-3 6-7-2 3-10 8-3-6-9 3-9-4-7z" fill="#960808" />
      <circle cx="14" cy="16" r="4.500" fill="#e0a0a0" />
    </svg>
  )
}

function KicadIcon() {
  return (
    <span className="flex h-[48px] w-[47px] items-center justify-center rounded-[10px] bg-[#2a38c4] font-['Liberation_Sans'] text-[30px] font-bold tracking-tight text-white">Ki</span>
  )
}

function PcbEditIcon() {
  return (
    <svg viewBox="0 0 48 48" className="size-[48px]">
      <rect width="48" height="48" rx="6" fill="#2f8a38" />
      <path d="M8 0v16l10 10v22M20 0v14l10 10v24M34 0v8l-6 6" fill="none" stroke="#8fd07a" strokeWidth="2" />
      <circle cx="38" cy="16" r="4" fill="#f28c1a" />
      <circle cx="7" cy="28" r="4" fill="#f28c1a" />
      <circle cx="38" cy="32" r="4" fill="#f28c1a" />
      <circle cx="38" cy="46" r="4" fill="#f28c1a" />
    </svg>
  )
}

function ThreeDIcon() {
  return (
    <svg viewBox="0 0 32 48" className="h-[48px] w-[32px]">
      <path d="M5 0h22l3 6v24H2V6z" fill="#3d3d3d" />
      <rect x="4" y="26" width="24" height="8" fill="#555" />
      <rect x="0" y="36" width="32" height="4" fill="#1a7bc9" />
      <path d="M10 34v14M22 34v14" stroke="#bbb" strokeWidth="1.500" />
    </svg>
  )
}

function EspIcon() {
  return (
    <svg viewBox="0 0 48 48" className="size-[48px]">
      <rect width="48" height="48" rx="7" fill="#d6c8ad" />
      <path d="M24 0v14M0 24h12M24 30v18M30 18h18" stroke="#333" strokeWidth="2" />
      <rect x="22" y="0" width="4" height="12" fill="#e0245e" />
      <rect x="30" y="18" width="12" height="8" fill="#e0245e" />
      <rect x="8" y="5" width="6" height="6" fill="#555" />
      <circle cx="30" cy="34" r="3" fill="#555" />
    </svg>
  )
}

function ExcelIcon() {
  return (
    <svg viewBox="0 0 48 48" className="size-[48px]">
      <rect x="10" y="0" width="38" height="16" fill="#33c481" />
      <rect x="10" y="16" width="38" height="16" fill="#21a366" />
      <rect x="10" y="32" width="38" height="16" fill="#185c37" />
      <rect x="0" y="10" width="24" height="28" rx="2" fill="#107c41" />
      <text x="12" y="30" textAnchor="middle" fontSize="18" fontWeight="700" fill="#fff" fontFamily="Liberation Sans">X</text>
    </svg>
  )
}

const TASKS = [
  { icon: <TaskFolder />, label: 'mechar', w: 184, tw: 80 },
  { icon: <TaskFolder />, label: 'order -', w: 182, tw: 78 },
  { icon: <ChromeIcon />, label: 'PCB Prc', w: 183, tw: 81 },
  { icon: <FaWhatsapp className="size-[48px] text-[#25d366]" />, label: 'Whats.', w: 173, tw: 72 },
  { icon: <CaptureIcon />, label: 'captur', w: 171, tw: 68, active: true },
  { icon: <KicadIcon />, label: 'Test 09.', w: 184, tw: 80 },
  { icon: <PcbEditIcon />, label: '*Test 09', w: 186, tw: 82 },
  { icon: <ThreeDIcon />, label: '3D Vie', w: 173, tw: 70, pad: 1 },
  { icon: <EspIcon />, label: 'ESP32-S', w: 183, tw: 80 },
  { icon: <ExcelIcon />, label: 'Design', w: 185, tw: 76 },
  { icon: <span className="flex size-[46px] items-center justify-center rounded-full bg-[#6e2f9e]"><FaGithub className="size-[36px] text-white" /></span>, label: 'GitHub', w: 148, tw: 76 },
]

function TaskItem({ icon, label, w, tw, active, pad = 0 }) {
  return (
    <div className="relative flex h-[80px] shrink-0 items-center" style={{ width: w, paddingLeft: pad }}>
      {active && <span className="absolute -left-[15px] top-0 h-[80px] w-[161px] rounded-[8px] bg-[#2e2e2e]" />}
      <span className="relative flex h-[48px] w-[48px] justify-center">{icon}</span>
      <span className="relative ml-[16px] overflow-hidden whitespace-nowrap text-[24px] tracking-[-0.4px] text-white" style={{ width: tw }}>
        {label}
      </span>
      <span className={`absolute bottom-[2px] h-[6px] rounded-full ${active ? 'left-[10px] w-[26px] bg-[#a5a9ae]' : 'left-[21px] w-[6px] bg-[#9a9a9a]'}`} />
    </div>
  )
}

function Taskbar() {
  return (
    <div className="relative z-10 flex h-[96px] shrink-0 items-center border-t-2 border-[#3b3b3b] bg-[#1e1e1e] pb-[2px] pl-[21px] pr-[42px] font-['Noto_Sans']">
      <WinIcon />
      <svg viewBox="0 0 48 46" className="ml-[43px] h-[46px] w-[48px] shrink-0">
        <rect x="14" y="0" width="34" height="32" rx="2" fill="#e8e8e8" />
        <rect x="0" y="12" width="34" height="34" rx="2" fill="#6b6b6b" opacity=".9" />
      </svg>
      <div className="ml-[43px] flex items-center">
        {TASKS.map((t) => <TaskItem key={t.label} {...t} />)}
      </div>
      <ChevronUp className="ml-auto size-[28px] shrink-0 text-white" strokeWidth={2} />
      <svg viewBox="0 0 36 24" className="ml-[32px] h-[24px] w-[36px] shrink-0">
        <path d="M8 24a7 7 0 0 1-1-14A11 11 0 0 1 28 9a8 8 0 0 1 0 15z" fill="#d8d8d8" />
        <path d="M18 3l9 7-18 12z" fill="#8c8c8c" />
      </svg>
      <div className="ml-[30px] w-[56px] shrink-0 pt-[2px] text-center text-[24px] leading-[32px] text-white">
        ENG<br />US
      </div>
      <Wifi className="ml-[31px] size-[32px] shrink-0 text-white" strokeWidth={2} />
      <Volume2 className="ml-[17px] size-[32px] shrink-0 text-white" strokeWidth={1.800} />
      <svg viewBox="0 0 32 32" className="ml-[16px] size-[32px] shrink-0 fill-none stroke-white stroke-2">
        <rect x="2" y="8" width="22" height="16" rx="2" />
        <path d="M26 12h3v8h-3M13 2l-3 10h6l-3 10" />
        <path d="M22 26l4 4 4-4a3 3 0 0 0-4-4 3 3 0 0 0-4 4z" fill="#fff" />
      </svg>
      <div className="ml-[6px] w-[150px] shrink-0 text-right text-[24px] leading-[32px] text-white">
        18:43<br />27/11/2024
      </div>
      <Bell className="ml-[17px] size-[28px] shrink-0 fill-[#d5dfe0] text-[#d5dfe0]" />
    </div>
  )
}

export default function App() {
  return (
    <div className="relative flex h-screen w-[2880px] flex-col overflow-hidden bg-[#2d2d2d] font-['Liberation_Sans',Arial,sans-serif]">
      <TabStrip />
      <div className="shrink-0 rounded-t-[16px] bg-[#3c3c3c]">
        <AddressBar />
        <BookmarksBar />
      </div>
      <main className="flex min-h-0 flex-1 overflow-hidden bg-[#f1f3f7] pl-[40px]">
        <LeftColumn />
        <RightColumn />
        <div className="ml-[38px] w-[22px] shrink-0 bg-white pl-[2px]">
          <div className="mt-[599px] h-[329px] rounded-[10px] bg-[#ced1d9]" />
        </div>
      </main>
      <ChatButton />
      <Taskbar />
    </div>
  )
}
